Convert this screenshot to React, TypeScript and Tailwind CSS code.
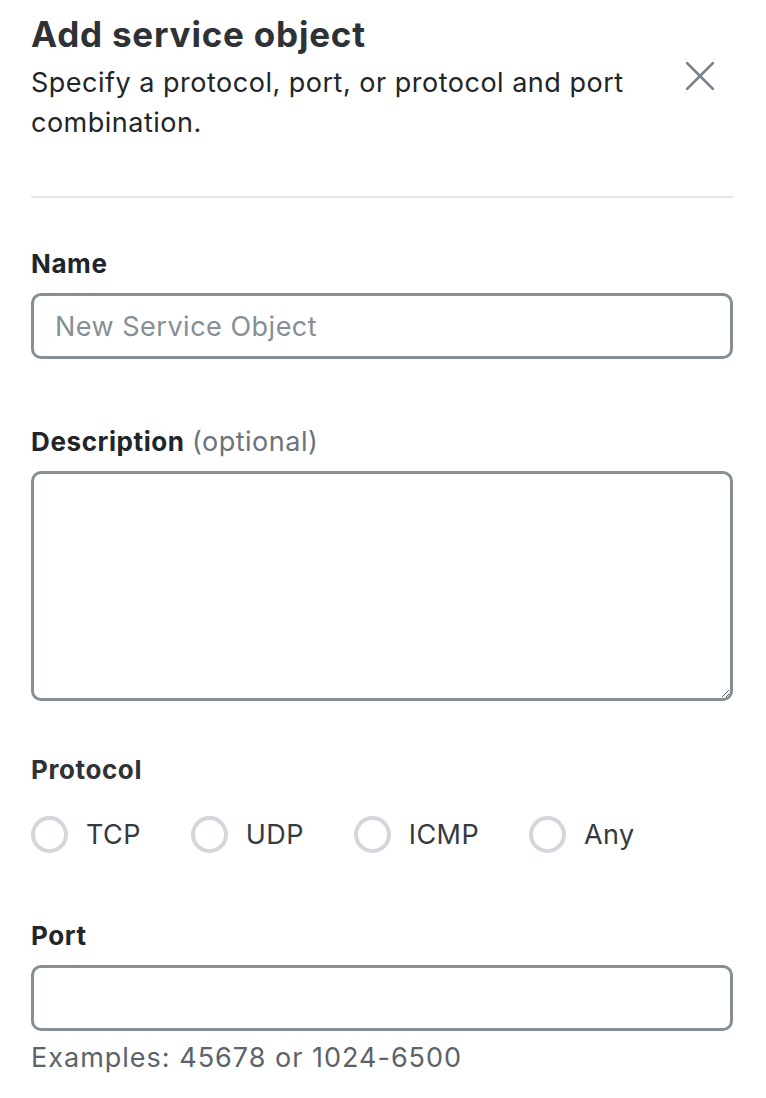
import React from "react";

const protocols = ["TCP", "UDP", "ICMP", "Any"];

const CloseIcon = () => (
  <svg width="28" height="28" viewBox="0 0 28 28" fill="none">
    <path
      d="M1 1L27 27M27 1L1 27"
      stroke="#7b838c"
      strokeWidth="2.5"
      strokeLinecap="round"
    />
  </svg>
);

const App = () => {
  return (
    <div className="w-[766px] h-[1098px] bg-white pl-[31px] pr-[33px] pt-[13px] font-['Inter',sans-serif] text-[#212529]">
      <div className="flex">
        <div className="flex-1 pr-[30px]">
          <h1 className="text-[35px] leading-[42px] font-bold text-[#2e3237] tracking-[0.8px]">
            Add service object
          </h1>
          <p className="mt-[8px] text-[27px] leading-[40px] tracking-[0.5px] text-[#212529]">
            Specify a protocol, port, or protocol and port combination.
          </p>
        </div>
        <button className="self-start mt-[49px] mr-[19px] shrink-0">
          <CloseIcon />
        </button>
      </div>

      <div className="mt-[53px] h-[2px] bg-[#e4e4e9]" />

      <label className="block mt-[46px] text-[26px] leading-[40px] font-bold tracking-[0.6px]">
        Name
      </label>
      <input
        className="mt-[9px] block w-full h-[66px] rounded-[10px] border-[3px] border-[#868e96] px-[21px] text-[27px] tracking-[0.5px] outline-none placeholder:text-[#868e96]"
        placeholder="New Service Object"
      />

      <label className="block mt-[63px] text-[26px] leading-[40px]">
        <span className="font-bold tracking-[0.6px]">Description</span>{" "}
        <span className="text-[#6c737a] text-[27px] tracking-[0.5px]">(optional)</span>
      </label>
      <textarea className="mt-[9px] block w-full h-[230px] rounded-[10px] border-[3px] border-[#868e96] px-[21px] py-[12px] text-[26px] outline-none resize-y" />

      <div className="mt-[49px] text-[26px] leading-[40px] font-bold tracking-[0.6px] text-[#2e3237]">
        Protocol
      </div>
      <div className="mt-[26px] flex items-center gap-[50px]">
        {protocols.map((p) => (
          <label key={p} className="flex items-center gap-[18px]">
            <span className="block w-[37px] h-[37px] rounded-full border-[4px] border-[#d3d7db] bg-white" />
            <span className="text-[27px] leading-[36px] tracking-[0.4px] text-[#343a40]">{p}</span>
          </label>
        ))}
      </div>

      <label className="block mt-[63px] text-[26px] leading-[40px] font-bold tracking-[0.6px]">
        Port
      </label>
      <input className="mt-[9px] block w-full h-[66px] rounded-[10px] border-[3px] border-[#868e96] px-[21px] text-[26px] outline-none" />
      <p className="mt-[7px] text-[27px] leading-[40px] tracking-[1px] text-[#5c636a]">
        Examples: 45678 or 1024-6500
      </p>
    </div>
  );
};

export default App;
